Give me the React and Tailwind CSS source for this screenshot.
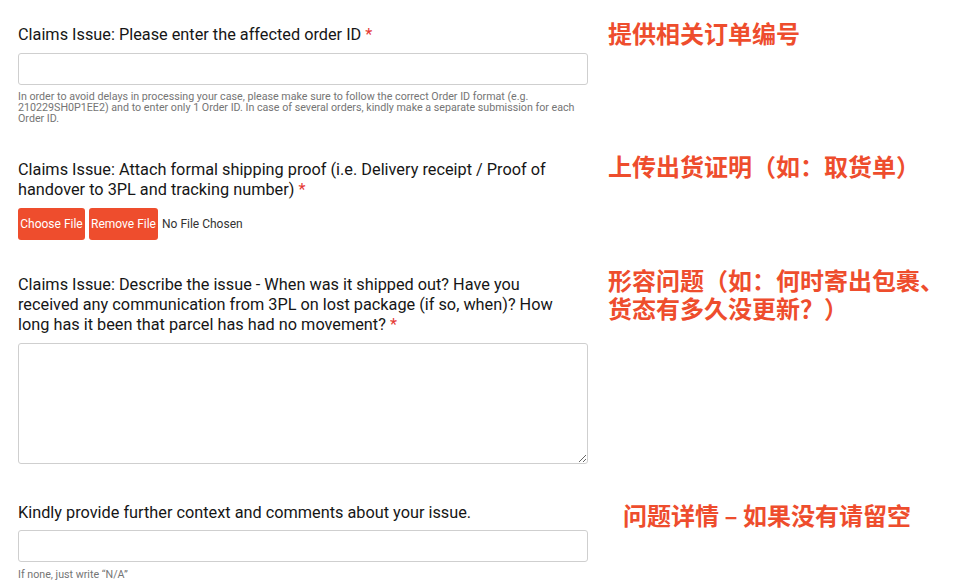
import React from "react";

const cjk = { fontFamily: '"Noto Sans CJK SC", "Noto Sans", sans-serif' };

function Req() {
  return <span className="text-[#e53935]"> *</span>;
}

export default function App() {
  return (
    <div
      className="w-[964px] h-[586px] bg-white overflow-hidden pt-[25px] text-[#161616]"
      style={{ fontFamily: 'Roboto, "Liberation Sans", Arial, sans-serif' }}
    >
      {/* Section 1 */}
      <div className="flex">
        <div className="w-[588px] pl-[18px] shrink-0">
          <div className="text-[16.3px] leading-[20px] w-[555px]">
            Claims Issue: Please enter the affected order ID<Req />
          </div>
          <input
            className="mt-[8px] block w-[570px] h-[32px] border border-[#cfcfcf] rounded-[3px] bg-white outline-none"
            type="text"
          />
          <p className="mt-[6px] text-[10.7px] leading-[11px] text-[#757575] w-[570px]">
            In order to avoid delays in processing your case, please make sure to follow the correct Order ID format (e.g. 210229SH0P1EE2) and to enter only 1 Order ID. In case of several orders, kindly make a separate submission for each Order ID.
          </p>
        </div>
        <div
          className="ml-[20px] -mt-[6px] text-[24px] leading-[28px] font-bold text-[#ee4d2d]"
          style={cjk}
        >
          提供相关订单编号
        </div>
      </div>

      {/* Section 2 */}
      <div className="flex mt-[36px]">
        <div className="w-[588px] pl-[18px] shrink-0">
          <div className="text-[16.3px] leading-[20px] w-[555px]">
            Claims Issue: Attach formal shipping proof (i.e. Delivery receipt / Proof of handover to 3PL and tracking number)<Req />
          </div>
          <div className="mt-[8px] flex items-center gap-[4px]">
            <button className="w-[67px] h-[32px] rounded-[3px] bg-[#ee4d2d] text-white text-[12px]">
              Choose File
            </button>
            <button className="w-[69px] h-[32px] rounded-[3px] bg-[#ee4d2d] text-white text-[12px]">
              Remove File
            </button>
            <span className="text-[12px] text-[#333]">No File Chosen</span>
          </div>
        </div>
        <div
          className="ml-[20px] -mt-[8px] text-[24px] leading-[28px] font-bold text-[#ee4d2d]"
          style={cjk}
        >
          上传出货证明（如：取货单）
        </div>
      </div>

      {/* Section 3 */}
      <div className="flex mt-[35px]">
        <div className="w-[588px] pl-[18px] shrink-0">
          <div className="text-[16.3px] leading-[20px] w-[555px]">
            Claims Issue: Describe the issue - When was it shipped out? Have you received any communication from 3PL on lost package (if so, when)? How long has it been that parcel has had no movement?<Req />
          </div>
          <textarea className="mt-[8px] block w-[570px] h-[121px] border border-[#cfcfcf] rounded-[3px] bg-white outline-none" />
        </div>
        <div
          className="ml-[20px] -mt-[9px] text-[24px] leading-[28px] font-bold text-[#ee4d2d]"
          style={cjk}
        >
          形容问题（如：何时寄出包裹、
          <br />
          货态有多久没更新？）
        </div>
      </div>

      {/* Section 4 */}
      <div className="flex mt-[39px]">
        <div className="w-[588px] pl-[18px] shrink-0">
          <div className="text-[16.3px] leading-[20px] w-[555px]">
            Kindly provide further context and comments about your issue.
          </div>
          <input
            className="mt-[7px] block w-[570px] h-[32px] border border-[#cfcfcf] rounded-[3px] bg-white outline-none"
            type="text"
          />
          <p className="mt-[7px] text-[10.7px] leading-[11px] text-[#757575]">
            If none, just write “N/A”
          </p>
        </div>
        <div
          className="ml-[35px] -mt-[2px] text-[24px] leading-[28px] font-bold text-[#ee4d2d]"
          style={cjk}
        >
          问题详情 – 如果没有请留空
        </div>
      </div>
    </div>
  );
}
